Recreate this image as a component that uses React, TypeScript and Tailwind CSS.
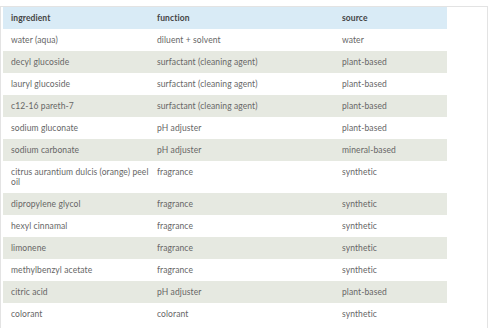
const rows: [string, string, string][] = [
  ["water (aqua)", "diluent + solvent", "water"],
  ["decyl glucoside", "surfactant (cleaning agent)", "plant-based"],
  ["lauryl glucoside", "surfactant (cleaning agent)", "plant-based"],
  ["c12-16 pareth-7", "surfactant (cleaning agent)", "plant-based"],
  ["sodium gluconate", "pH adjuster", "plant-based"],
  ["sodium carbonate", "pH adjuster", "mineral-based"],
  ["citrus aurantium dulcis (orange) peel oil", "fragrance", "synthetic"],
  ["dipropylene glycol", "fragrance", "synthetic"],
  ["hexyl cinnamal", "fragrance", "synthetic"],
  ["limonene", "fragrance", "synthetic"],
  ["methylbenzyl acetate", "fragrance", "synthetic"],
  ["citric acid", "pH adjuster", "plant-based"],
  ["colorant", "colorant", "synthetic"],
];

export default function App() {
  return (
    <div className="h-[328px] w-[500px] overflow-hidden bg-white pt-[6px] font-['Lato',sans-serif]">
      <div className="h-[400px] w-[488px] border-l border-r border-t border-[#e3e3e3] pl-[2px]">
        <table className="w-[444px] table-fixed border-collapse text-left text-[8.5px] tracking-[0.1px] text-[#666]">
          <colgroup>
            <col className="w-[146px]" />
            <col className="w-[185px]" />
            <col className="w-[113px]" />
          </colgroup>
          <thead>
            <tr className="h-[22px] bg-[#d9ebf6]">
              <th className="px-[8px] font-bold text-[#444]">ingredient</th>
              <th className="px-[8px] font-bold text-[#444]">function</th>
              <th className="px-[8px] font-bold text-[#444]">source</th>
            </tr>
          </thead>
          <tbody>
            {rows.map((r, i) => (
              <tr
                key={r[0]}
                className={i % 2 === 1 ? "bg-[#e6e9e1]" : "bg-white"}
              >
                <td className="px-[8px] py-[6px] align-top leading-[10px]">
                  <div className="w-[140px]">{r[0]}</div>
                </td>
                <td className="px-[8px] py-[6px] align-top leading-[10px]">{r[1]}</td>
                <td className="px-[8px] py-[6px] align-top leading-[10px]">{r[2]}</td>
              </tr>
            ))}
          </tbody>
        </table>
      </div>
    </div>
  );
}
